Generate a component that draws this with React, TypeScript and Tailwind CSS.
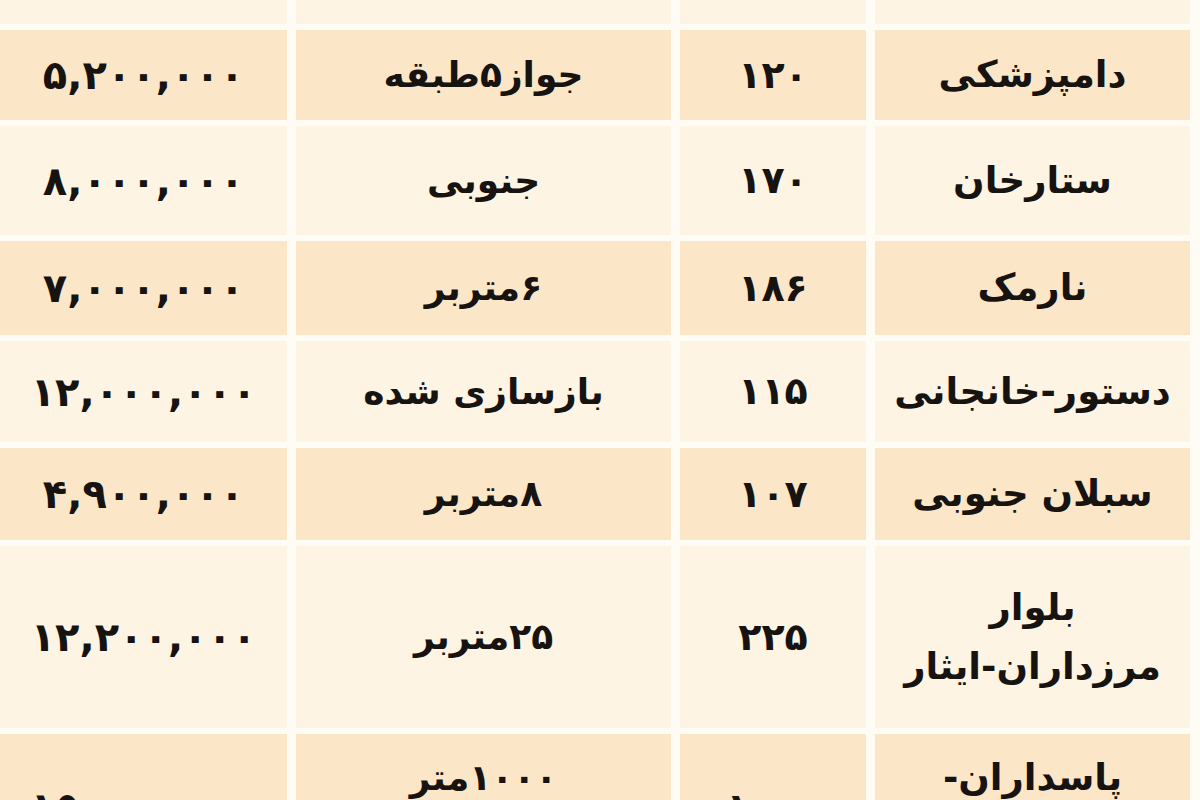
import React from "react";

type Row = {
  place: string[];
  area: string;
  note: string[];
  price: string;
  height: string;
  tone: "peach" | "cream";
};

const ROWS: Row[] = [
  { place: [""], area: "", note: [""], price: "", height: "h-[24px]", tone: "cream" },
  { place: ["دامپزشکی"], area: "۱۲۰", note: ["جواز۵طبقه"], price: "۵,۲۰۰,۰۰۰", height: "h-[90px]", tone: "peach" },
  { place: ["ستارخان"], area: "۱۷۰", note: ["جنوبی"], price: "۸,۰۰۰,۰۰۰", height: "h-[109px]", tone: "cream" },
  { place: ["نارمک"], area: "۱۸۶", note: ["۶متربر"], price: "۷,۰۰۰,۰۰۰", height: "h-[94px]", tone: "peach" },
  { place: ["دستور-خانجانی"], area: "۱۱۵", note: ["بازسازی شده"], price: "۱۲,۰۰۰,۰۰۰", height: "h-[101px]", tone: "cream" },
  { place: ["سبلان جنوبی"], area: "۱۰۷", note: ["۸متربر"], price: "۴,۹۰۰,۰۰۰", height: "h-[92px]", tone: "peach" },
  { place: ["بلوار", "مرزداران-ایثار"], area: "۲۲۵", note: ["۲۵متربر"], price: "۱۲,۲۰۰,۰۰۰", height: "h-[182px]", tone: "cream" },
  { place: ["پاسداران-", "گلستان"], area: "۱۰۰۰", note: ["۱۰۰۰متر", "زمین"], price: "۱۵,۰۰۰,۰۰۰", height: "h-[146px]", tone: "peach" },
];

const Cell: React.FC<{ lines: string[]; tone: Row["tone"]; extra?: string }> = ({
  lines,
  tone,
  extra = "",
}) => (
  <div
    className={`flex flex-col items-center justify-center text-center leading-[1.6] ${
      tone === "peach" ? "bg-[#fce6c8]" : "bg-[#fdf4e3]"
    } ${extra}`}
  >
    {lines.map((l, i) => (
      <span key={i}>{l}</span>
    ))}
  </div>
);

export default function App() {
  return (
    <div className="h-[800px] w-[1200px] overflow-hidden bg-[#fffcf5] pr-[10px] font-['DejaVu_Sans',sans-serif] font-bold text-[36px] text-[#161311]">
      <div dir="rtl" className="flex flex-col gap-[6px]">
        {ROWS.map((r, i) => (
          <div
            key={i}
            className={`grid grid-cols-[315px_186px_375px_287px] gap-x-[9px] shrink-0 ${r.height}`}
          >
            <Cell lines={r.place} tone={r.tone} extra="text-[37px]" />
            <Cell lines={[r.area]} tone={r.tone} extra="text-[38px] tracking-[0.06em]" />
            <Cell lines={r.note} tone={r.tone} />
            <Cell lines={[r.price]} tone={r.tone} extra="text-[40px] tracking-[0.14em] leading-[1.45]" />
          </div>
        ))}
      </div>
    </div>
  );
}
